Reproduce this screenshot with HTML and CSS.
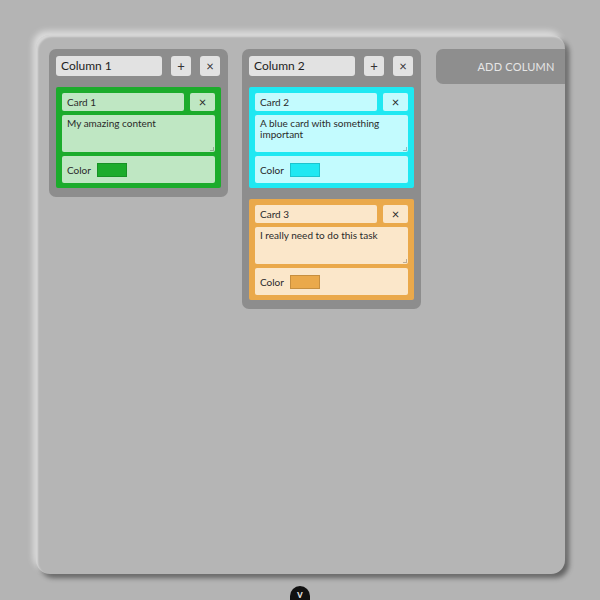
FILE: index.html
```html
<!DOCTYPE html>
<html>
<head>
<meta charset="utf-8">
<link rel="stylesheet" href="styles.css">
</head>
<body>
<div class="page">
  <div class="board">
    <div class="column">
      <div class="col-head">
        <div class="col-title">Column 1</div>
        <div class="btn">+</div>
        <div class="btn">×</div>
      </div>
      <div class="card green">
        <div class="card-head">
          <div class="card-title">Card 1</div>
          <div class="card-x">×</div>
        </div>
        <div class="card-body">My amazing content<span class="grip"></span></div>
        <div class="card-color">Color <span class="swatch"></span></div>
      </div>
    </div>
    <div class="column">
      <div class="col-head">
        <div class="col-title">Column 2</div>
        <div class="btn">+</div>
        <div class="btn">×</div>
      </div>
      <div class="card cyan">
        <div class="card-head">
          <div class="card-title">Card 2</div>
          <div class="card-x">×</div>
        </div>
        <div class="card-body">A blue card with something important<span class="grip"></span></div>
        <div class="card-color">Color <span class="swatch"></span></div>
      </div>
      <div class="card orange">
        <div class="card-head">
          <div class="card-title">Card 3</div>
          <div class="card-x">×</div>
        </div>
        <div class="card-body">I really need to do this task<span class="grip"></span></div>
        <div class="card-color">Color <span class="swatch"></span></div>
      </div>
    </div>
    <div class="add-col">ADD COLUMN</div>
  </div>
  <div class="toggle">v</div>
</div>
</body>
</html>
```

FILE: styles.css
```css
html, body {
  margin: 0;
  padding: 0;
  background: #b4b4b4;
  font-family: "Lato", "Noto Sans", sans-serif;
  color: #2a2a2a;
}
.page {
  width: 600px;
  height: 600px;
  overflow: hidden;
  display: flex;
  flex-direction: column;
  align-items: flex-start;
}
.board {
  flex-shrink: 0;
  margin: 35px 0 0 36px;
  width: 529px;
  height: 539px;
  box-sizing: border-box;
  padding: 14px 0 0 13px;
  background: #b5b5b5;
  border-radius: 14px;
  box-shadow: -3px -4px 6px rgba(255,255,255,0.55), 4px 4px 5px rgba(0,0,0,0.45), inset 2px 2px 2px rgba(255,255,255,0.45);
  display: flex;
  align-items: flex-start;
  gap: 14px;
  overflow: hidden;
}
.column {
  flex: 0 0 179px;
  box-sizing: border-box;
  background: #8d8d8d;
  border-radius: 7px;
  padding: 7px 7px 9px 7px;
  display: flex;
  flex-direction: column;
  gap: 11px;
}
.col-head {
  display: flex;
  align-items: center;
  gap: 8px;
}
.col-title {
  width: 106px;
  height: 20px;
  box-sizing: border-box;
  background: #e2e2e2;
  border-radius: 3px;
  padding-left: 5px;
  font-size: 12px;
  line-height: 20px;
  color: #1e1e1e;
}
.btn {
  width: 20px;
  height: 20px;
  background: #e2e2e2;
  border-radius: 3px;
  font-size: 13px;
  line-height: 20px;
  text-align: center;
  color: #333;
  margin-left: 1px;
}
.card {
  width: 165px;
  box-sizing: border-box;
  padding: 6px 6px 5px 6px;
  display: flex;
  flex-direction: column;
  gap: 4px;
  border-radius: 2px;
}
.card-head {
  display: flex;
  gap: 6px;
}
.card-title {
  flex: 0 0 122px;
  height: 18px;
  box-sizing: border-box;
  padding-left: 5px;
  font-size: 10px;
  line-height: 18px;
  border-radius: 2px;
}
.card-x {
  flex: 1;
  height: 18px;
  font-size: 13px;
  line-height: 18px;
  text-align: center;
  border-radius: 2px;
}
.card-body {
  position: relative;
  height: 37px;
  box-sizing: border-box;
  padding: 3px 5px;
  font-size: 10px;
  line-height: 11px;
  border-radius: 2px;
}
.grip {
  position: absolute;
  right: 1px;
  bottom: 1px;
  width: 3px;
  height: 3px;
  border-right: 1px solid rgba(0,0,0,0.25);
  border-bottom: 1px solid rgba(0,0,0,0.25);
}
.card-color {
  height: 27px;
  box-sizing: border-box;
  padding-left: 5px;
  display: flex;
  align-items: center;
  gap: 6px;
  font-size: 10px;
  border-radius: 2px;
}
.swatch {
  width: 30px;
  height: 14px;
  box-sizing: border-box;
  border: 1px solid rgba(0,0,0,0.15);
}
.green { background: #1cac2c; }
.green .card-title, .green .card-x, .green .card-body, .green .card-color { background: #bfe7c3; }
.green .swatch { background: #1cac2c; }
.cyan { background: #1fe8f2; }
.cyan .card-title, .cyan .card-x, .cyan .card-body, .cyan .card-color { background: #c3fbfe; }
.cyan .swatch { background: #1fe8f2; }
.orange { background: #eaa94b; }
.orange .card-title, .orange .card-x, .orange .card-body, .orange .card-color { background: #fbe7ca; }
.orange .swatch { background: #eaa94b; }
.add-col {
  flex: 0 0 160px;
  height: 35px;
  margin-left: 1px;
  background: #8e8e8e;
  border-radius: 7px;
  color: #e6e6e6;
  font-size: 11px;
  line-height: 35px;
  text-align: center;
  letter-spacing: 0.2px;
}
.toggle {
  flex-shrink: 0;
  align-self: center;
  margin-top: 12px;
  width: 20px;
  height: 22px;
  background: #111;
  border-radius: 10px 10px 0 0;
  color: #ddd;
  font-size: 11px;
  font-weight: bold;
  text-align: center;
  line-height: 16px;
}
```
